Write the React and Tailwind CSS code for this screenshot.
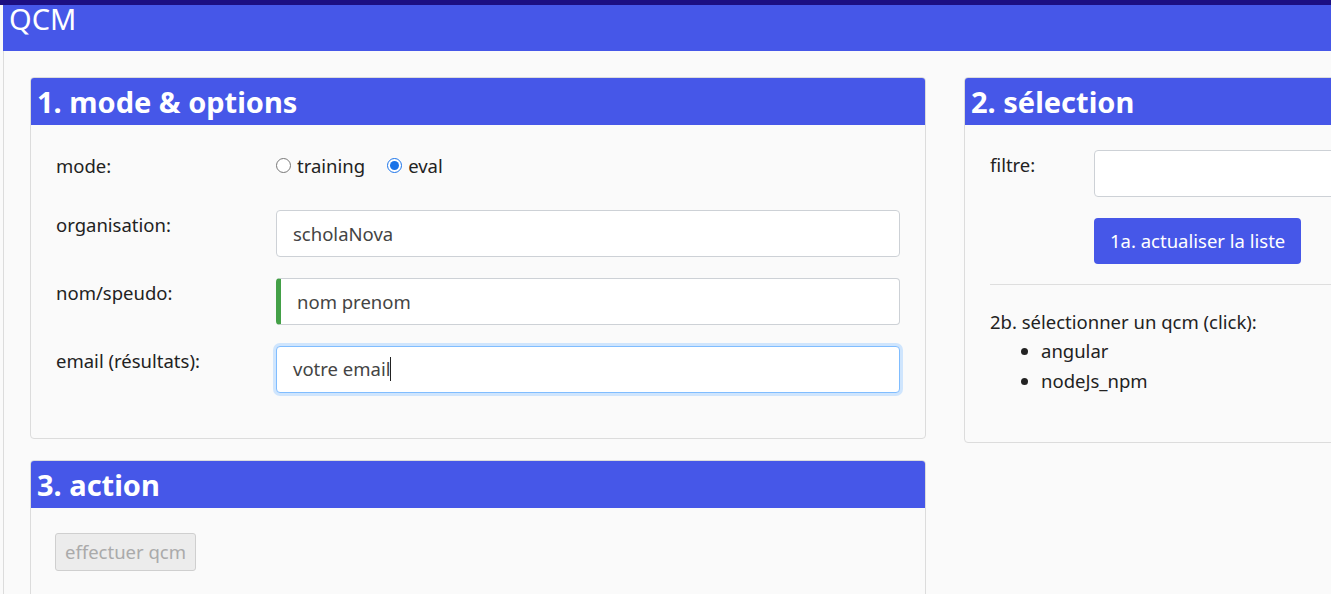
import React from 'react';

const font = { fontFamily: '"Noto Sans", "Open Sans", sans-serif' };

const Card = ({ title, children, className = '' }) => (
  <div className={`w-[896px] shrink-0 rounded-[4px] border border-[#dcdcdc] bg-[#fafafa] overflow-hidden ${className}`}>
    <div className="h-[47px] bg-[#4657e8] px-[6px] flex items-center">
      <h2 className="text-[29px] font-bold text-white leading-none">{title}</h2>
    </div>
    {children}
  </div>
);

const Row = ({ label, children, className = '' }) => (
  <div className={`flex items-start ${className}`}>
    <div className="w-[220px] shrink-0 pt-[1px] text-[18.5px] text-[#222]">{label}</div>
    <div className="flex-1">{children}</div>
  </div>
);

const App = () => {
  return (
    <div className="w-[1331px] h-[594px] overflow-hidden bg-[#fafafa] text-[#222]" style={font}>
      <div className="h-[5px] bg-[#1c0f82]" />
      <div className="ml-[3px] h-[46px] bg-[#4657e8] px-[6px] flex items-start">
        <h1 className="text-[29px] text-white leading-[28px]">QCM</h1>
      </div>
      <div className="ml-[3px] border-l border-[#dcdcdc] h-[543px] pl-[26px] pt-[26px]">
        <div className="flex gap-[38px] items-start">
          <div className="flex flex-col gap-[21px]">
            <Card title="1. mode & options">
              <div className="pl-[25px] pr-[25px] pt-[27px] pb-[45px]">
                <div className="flex items-center">
                  <div className="w-[220px] text-[18.5px]">mode:</div>
                  <label className="flex items-center gap-[6px] text-[18.5px]">
                    <input type="radio" name="mode" className="w-[15px] h-[15px] m-0" />
                    training
                  </label>
                  <label className="ml-[22px] flex items-center gap-[6px] text-[18.5px]">
                    <input type="radio" name="mode" defaultChecked className="w-[15px] h-[15px] m-0 accent-[#1a73e8]" />
                    eval
                  </label>
                </div>
                <Row label="organisation:" className="mt-[30px]">
                  <input
                    type="text"
                    defaultValue="scholaNova"
                    className="w-[624px] h-[47px] rounded-[4px] border border-[#cdd1d6] bg-white px-[16px] text-[18.5px] text-[#444] outline-none"
                  />
                </Row>
                <Row label="nom/speudo:" className="mt-[21px]">
                  <input
                    type="text"
                    defaultValue="nom prenom"
                    className="w-[624px] h-[47px] rounded-[4px] border border-[#cdd1d6] border-l-[5px] border-l-[#43a047] bg-white px-[16px] text-[18.5px] text-[#444] outline-none"
                  />
                </Row>
                <Row label="email (résultats):" className="mt-[21px]">
                  <div className="w-[624px] h-[47px] rounded-[4px] border border-[#80bdff] ring-[3px] ring-[#cfe5fd] bg-white px-[16px] text-[18.5px] text-[#444] flex items-center">
                    votre email<span className="inline-block w-px h-[24px] bg-[#222]" />
                  </div>
                </Row>
              </div>
            </Card>
            <Card title="3. action">
              <div className="pl-[24px] pr-[25px] pt-[25px] pb-[30px]">
                <button
                  disabled
                  className="h-[38px] px-[9px] rounded-[3px] border border-[#cfcfcf] bg-[#ececec] text-[18.5px] text-[#aaa]"
                >
                  effectuer qcm
                </button>
              </div>
            </Card>
          </div>
          <Card title="2. sélection">
            <div className="pl-[25px] pt-[25px] pb-[46px]">
              <div className="flex items-start">
                <div className="w-[104px] shrink-0 pt-[1px] text-[18.5px]">filtre:</div>
                <input
                  type="text"
                  className="w-[600px] h-[47px] rounded-[4px] border border-[#cdd1d6] bg-white px-[16px] text-[18.5px] outline-none"
                />
              </div>
              <div className="ml-[104px] mt-[21px]">
                <button className="h-[46px] px-[16px] rounded-[4px] bg-[#4657e8] text-white text-[18.5px]">
                  1a. actualiser la liste
                </button>
              </div>
              <hr className="mt-[20px] border-t border-[#dedede]" />
              <p className="mt-[23px] text-[18.5px]">2b. sélectionner un qcm (click):</p>
              <ul className="list-disc pl-[51px] text-[18.5px] leading-[30px]">
                <li>angular</li>
                <li>nodeJs_npm</li>
              </ul>
            </div>
          </Card>
        </div>
      </div>
    </div>
  );
};

export default App;
